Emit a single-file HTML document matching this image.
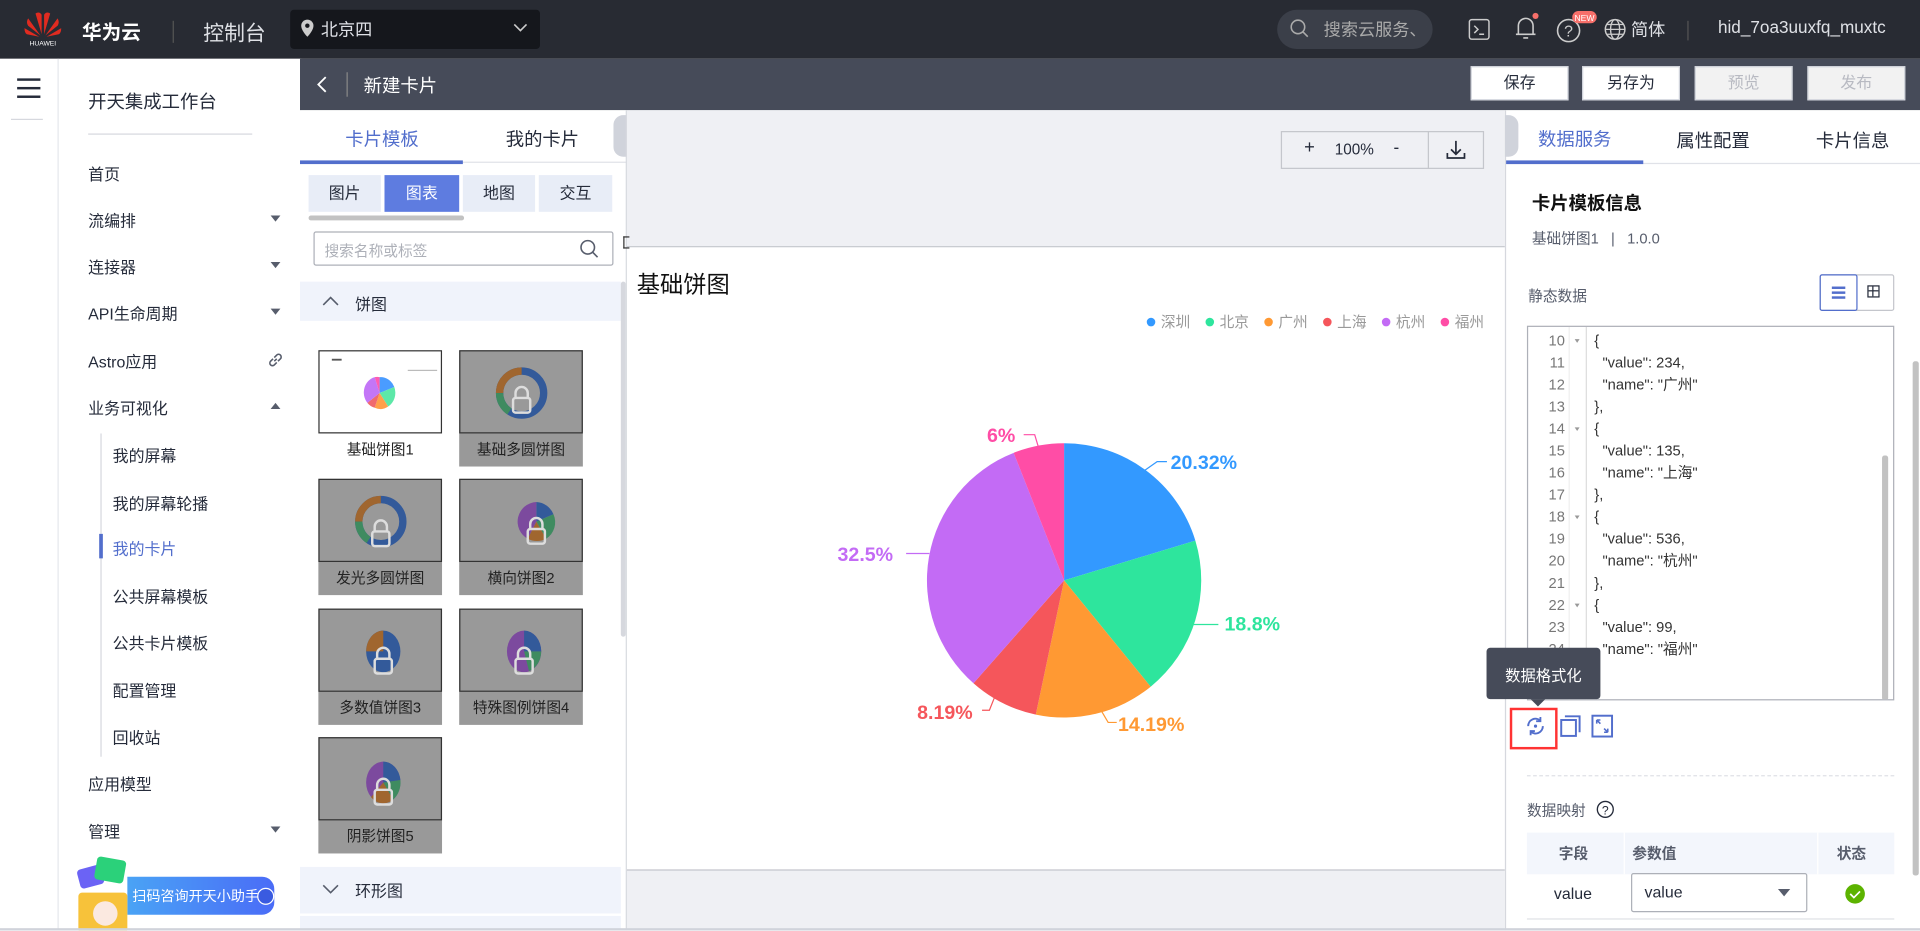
<!DOCTYPE html>
<html><head><meta charset="utf-8"><style>
*{box-sizing:border-box;margin:0;padding:0}
html,body{width:1920px;height:930px;overflow:hidden;background:#fff}
body{font-family:"Liberation Sans","Noto Sans CJK SC",sans-serif;color:#252b3a}
#w{position:absolute;left:0;top:0;width:1568px;height:760px;transform:scale(1.22449);transform-origin:0 0;overflow:hidden}
.a{position:absolute}
.top{left:0;top:0;width:1568px;height:48px;background:#282b33;color:#fff}
.nav{left:0;top:48px;width:48px;height:712px;border-right:1px solid #e3e5ea;background:#fff}
.side{left:48px;top:48px;width:197px;height:712px;background:#fff}
.side .it{position:absolute;left:24px;font-size:13px;color:#252b3a}
.side .sub{left:44px}
.tri{position:absolute;right:16px;width:0;height:0;border-left:4px solid transparent;border-right:4px solid transparent;border-top:5px solid #575d6c}
.bar{left:245px;top:48px;width:1323px;height:42px;background:#464b59}
.btn{position:absolute;top:6px;width:80px;height:28px;background:#fff;border:1px solid #d0d3db;font-size:13px;text-align:center;line-height:26px;color:#252b3a}
.btn.d{background:#f2f2f2;color:#b8bac2}
.lp{left:245px;top:90px;width:267px;height:670px;background:#fff}
.card{position:absolute;width:101px;font-size:12px;text-align:center}
.card .im{height:68px;border:1px solid #333;background:#999;position:relative;overflow:hidden}
.card .lb{height:27px;line-height:27px;background:#999;color:#222}
.cv{left:512px;top:90px;width:717px;height:670px;background:#eff0f4}
.rp{left:1229px;top:90px;width:339px;height:670px;background:#fff;border-left:1px solid #d6d8de}
.code{font-family:"Liberation Sans","Noto Sans CJK SC",sans-serif;font-size:12px;line-height:18px;white-space:pre;color:#333}
.fa{position:absolute;left:38px;width:0;height:0;border-left:2.5px solid transparent;border-right:2.5px solid transparent;border-top:3px solid #999}
</style></head><body><div id="w">

<div class="a top">
  <svg class="a" style="left:17px;top:8px" width="36" height="30" viewBox="0 0 36 30">
    <g fill="#e02b20"><path d="M17 20 L12 3 Q15 1 17 4Z"/><path d="M19 20 L24 3 Q21 1 19 4Z"/><path d="M16 21 L6 7 Q4 10 6 13Z"/><path d="M20 21 L30 7 Q32 10 30 13Z"/><path d="M15 22 L3 15 Q3 19 5 20Z"/><path d="M21 22 L33 15 Q33 19 31 20Z"/></g>
    <text x="18" y="29" font-size="5.5" fill="#fff" text-anchor="middle" font-family="Liberation Sans">HUAWEI</text>
  </svg>
  <div class="a" style="left:67px;top:13px;font-size:16px;font-weight:bold">华为云</div>
  <div class="a" style="left:141px;top:17px;width:1px;height:18px;background:#555"></div>
  <div class="a" style="left:166px;top:13px;font-size:17px;color:#dfe1e6">控制台</div>
  <div class="a" style="left:237px;top:8px;width:204px;height:32px;background:#15171c;border-radius:3px"></div>
  <svg class="a" style="left:245px;top:15px" width="12" height="16" viewBox="0 0 12 16"><path d="M6 1a5 5 0 0 0-5 5c0 4 5 9 5 9s5-5 5-9a5 5 0 0 0-5-5z" fill="#ccc"/><circle cx="6" cy="6" r="1.8" fill="#15171c"/></svg>
  <div class="a" style="left:262px;top:14px;font-size:14px;color:#dfe1e6">北京四</div>
  <svg class="a" style="left:419px;top:19px" width="12" height="8"><path d="M1 1l5 5 5-5" stroke="#ccc" fill="none" stroke-width="1.3"/></svg>
  <div class="a" style="left:1043px;top:8px;width:127px;height:32px;background:#3b3f49;border-radius:16px"></div>
  <svg class="a" style="left:1053px;top:15px" width="16" height="18"><circle cx="7" cy="7" r="5.5" stroke="#aaa" fill="none" stroke-width="1.3"/><path d="M11 11l4 4" stroke="#aaa" stroke-width="1.3"/></svg>
  <div class="a" style="left:1081px;top:14px;font-size:14px;color:#aaa;width:84px;overflow:hidden;white-space:nowrap">搜索云服务、f</div>
  <svg class="a" style="left:1199px;top:15px" width="18" height="18"><rect x="1" y="1" width="16" height="16" rx="2" stroke="#ccc" fill="none" stroke-width="1.2"/><path d="M5 6l3 3-3 3M9 13h4" stroke="#ccc" fill="none" stroke-width="1.2"/></svg>
  <svg class="a" style="left:1235px;top:10px" width="22" height="24"><path d="M5 18V11a6 6 0 0 1 12 0v7zM3 18h16M9 21h4" stroke="#ccc" fill="none" stroke-width="1.3"/><circle cx="19" cy="3" r="2.5" fill="#f66f6a"/></svg>
  <svg class="a" style="left:1270px;top:8px" width="36" height="30"><circle cx="11" cy="17" r="9" stroke="#ccc" fill="none" stroke-width="1.3"/><text x="11" y="22" font-size="13" fill="#ccc" text-anchor="middle">?</text><rect x="14" y="1" width="20" height="10" rx="5" fill="#f66f6a"/><text x="24" y="9" font-size="7" fill="#fff" text-anchor="middle">NEW</text></svg>
  <svg class="a" style="left:1309px;top:14px" width="20" height="20"><circle cx="10" cy="10" r="8" stroke="#ccc" fill="none" stroke-width="1.2"/><ellipse cx="10" cy="10" rx="3.7" ry="8" stroke="#ccc" fill="none" stroke-width="1.1"/><path d="M2 10h16M3.5 6h13M3.5 14h13" stroke="#ccc" stroke-width="1"/></svg>
  <div class="a" style="left:1332px;top:14px;font-size:14px;color:#dfe1e6">简体</div>
  <div class="a" style="left:1378px;top:17px;width:1px;height:16px;background:#555"></div>
  <div class="a" style="left:1403px;top:14px;font-size:14px;color:#dfe1e6">hid_7oa3uuxfq_muxtc</div>
</div>

<div class="a nav">
  <div class="a" style="left:14px;top:16px;width:19px;height:2px;background:#252b3a;box-shadow:0 7px 0 #252b3a,0 14px 0 #252b3a"></div>
  <div class="a" style="left:9px;top:49px;width:26px;height:1px;background:#d6d8de"></div>
</div>

<div class="a side">
  <div class="it" style="top:24px;font-size:15px">开天集成工作台</div>
  <div class="a" style="left:24px;top:61px;width:134px;height:1px;background:#d6d8de"></div>
  <div class="it" style="top:84px">首页</div>
  <div class="it" style="top:122px">流编排</div><div class="tri" style="top:128px"></div>
  <div class="it" style="top:160px">连接器</div><div class="tri" style="top:166px"></div>
  <div class="it" style="top:198px">API生命周期</div><div class="tri" style="top:204px"></div>
  <div class="it" style="top:237px">Astro应用</div>
  <svg class="a" style="left:170px;top:239px" width="14" height="14"><path d="M6 8l2-2M5 6L3 8a2 2 0 0 0 3 3l2-2M9 8l2-2a2 2 0 0 0-3-3L6 5" stroke="#575d6c" fill="none" stroke-width="1.3"/></svg>
  <div class="it" style="top:275px">业务可视化</div><div class="tri" style="top:281px;border-top:0;border-bottom:5px solid #575d6c"></div>
  <div class="a" style="left:34px;top:306px;width:1px;height:264px;background:#d6d8de"></div>
  <div class="a" style="left:33px;top:388px;width:3px;height:20px;background:#526ecc"></div>
  <div class="it sub" style="top:314px">我的屏幕</div>
  <div class="it sub" style="top:353px">我的屏幕轮播</div>
  <div class="it sub" style="top:390px;color:#526ecc">我的卡片</div>
  <div class="it sub" style="top:429px">公共屏幕模板</div>
  <div class="it sub" style="top:467px">公共卡片模板</div>
  <div class="it sub" style="top:506px">配置管理</div>
  <div class="it sub" style="top:544px">回收站</div>
  <div class="it" style="top:582px">应用模型</div>
  <div class="it" style="top:621px">管理</div><div class="tri" style="top:627px"></div>
  <div class="a" style="left:56px;top:668px;width:120px;height:31px;border-radius:0 10px 10px 0;background:linear-gradient(90deg,#4aa3f5,#4a6cf7)"></div>
  <div class="a" style="left:60px;top:676px;font-size:11.5px;color:#fff">扫码咨询开天小助手</div>
  <div class="a" style="left:162px;top:677px;width:14px;height:14px;border-radius:7px;background:#3a5be0;border:1px solid #fff"></div>
  <div class="a" style="left:16px;top:660px;width:20px;height:16px;background:#6b63f5;border-radius:3px;transform:rotate(-15deg)"></div>
  <div class="a" style="left:30px;top:653px;width:24px;height:19px;background:#2bd17a;border-radius:3px;transform:rotate(10deg)"></div>
  <div class="a" style="left:16px;top:681px;width:40px;height:33px;background:#f7c23a;border-radius:3px"></div>
  <div class="a" style="left:28px;top:688px;width:20px;height:20px;background:#fbe9e0;border-radius:10px"></div>
</div>
<div class="a" style="left:245px;top:48px;width:1px;height:712px;background:#e3e5ea"></div>

<div class="a bar">
  <svg class="a" style="left:13px;top:13px" width="10" height="16"><path d="M8 2L2 8l6 6" stroke="#fff" fill="none" stroke-width="1.5"/></svg>
  <div class="a" style="left:38px;top:11px;width:1px;height:20px;background:#888"></div>
  <div class="a" style="left:52px;top:11px;font-size:15px;color:#fff">新建卡片</div>
  <div class="btn" style="left:956px">保存</div>
  <div class="btn" style="left:1047px">另存为</div>
  <div class="btn d" style="left:1139px">预览</div>
  <div class="btn d" style="left:1231px">发布</div>
</div>

<div class="a lp">
  <div class="a" style="left:12px;top:13px;font-size:15px;color:#526ecc;width:110px;text-align:center">卡片模板</div>
  <div class="a" style="left:148px;top:13px;font-size:15px;width:100px;text-align:center">我的卡片</div>
  <div class="a" style="left:0;top:42px;width:267px;height:1px;background:#e0e2e8"></div>
  <div class="a" style="left:0;top:41px;width:133px;height:3px;background:#526ecc"></div>
  <div class="a" style="left:256px;top:4px;width:11px;height:34px;background:#d0d3db;border-radius:8px 0 0 8px"></div>
  <div class="a" style="left:7px;top:53px;width:59px;height:30px;background:#e8edf7;font-size:13px;text-align:center;line-height:30px">图片</div>
  <div class="a" style="left:69px;top:53px;width:61px;height:30px;background:#5e7ce0;color:#fff;font-size:13px;text-align:center;line-height:30px">图表</div>
  <div class="a" style="left:133px;top:53px;width:59px;height:30px;background:#e8edf7;font-size:13px;text-align:center;line-height:30px">地图</div>
  <div class="a" style="left:195px;top:53px;width:60px;height:30px;background:#e8edf7;font-size:13px;text-align:center;line-height:30px">交互</div>
  <div class="a" style="left:7px;top:86px;width:127px;height:4px;background:#c2c2c2;border-radius:2px"></div>
  <div class="a" style="left:11px;top:99px;width:245px;height:28px;border:1px solid #adb0b8;border-radius:2px;font-size:12px;color:#adb0b8;padding:6px 8px">搜索名称或标签</div>
  <svg class="a" style="left:228px;top:105px" width="16" height="17"><circle cx="7" cy="7" r="5.5" stroke="#575d6c" fill="none" stroke-width="1.3"/><path d="M11 11l4 4" stroke="#575d6c" stroke-width="1.3"/></svg>
  <div class="a" style="left:0;top:140px;width:262px;height:32px;background:#f0f3fb"></div>
  <svg class="a" style="left:18px;top:152px" width="14" height="9"><path d="M1 7l6-6 6 6" stroke="#575d6c" fill="none" stroke-width="1.3"/></svg>
  <div class="a" style="left:45px;top:148px;font-size:13px">饼图</div>
  <div class="a" style="left:262px;top:140px;width:4px;height:290px;background:#d6d8de;border-radius:2px"></div>
  <div class="a" style="left:0;top:618px;width:262px;height:38px;background:#f0f3fb"></div>
  <svg class="a" style="left:18px;top:632px" width="14" height="9"><path d="M1 1l6 6 6-6" stroke="#575d6c" fill="none" stroke-width="1.3"/></svg>
  <div class="a" style="left:45px;top:627px;font-size:13px">环形图</div>
  <div class="a" style="left:0;top:658px;width:262px;height:12px;background:#f0f3fb"></div>

  <div class="card" style="left:15px;top:196px"><div class="im" style="background:#fff">
    <svg width="99" height="66"><g transform="translate(-12,0)"><path d="M61 34 L61 21 A12 13 0 0 1 73 29Z" fill="#4a9cff"/><path d="M61 34 L73 29 A12 13 0 0 1 68 45Z" fill="#5de8a8"/><path d="M61 34 L68 45 A12 13 0 0 1 57 46Z" fill="#ffa04a"/><path d="M61 34 L57 46 A12 13 0 0 1 51 42Z" fill="#f06a6e"/><path d="M61 34 L51 42 A12 13 0 0 1 57 21Z" fill="#c376f7"/><path d="M61 34 L57 21 A12 13 0 0 1 61 21Z" fill="#ff5bb0"/></g><rect x="10" y="6" width="8" height="1.5" fill="#555"/><rect x="72" y="15" width="24" height="1" fill="#bbb"/></svg>
  </div><div class="lb" style="background:#fff">基础饼图1</div></div>
  <div class="card" style="left:130px;top:196px"><div class="im"><svg width="99" height="66"><circle cx="50" cy="34" r="18" stroke="#335a9a" stroke-width="6" fill="none"/><path d="M50 16 A18 18 0 0 0 32 34" stroke="#a0662f" stroke-width="6" fill="none"/><path d="M32 34 A18 18 0 0 0 40 49" stroke="#3f8b60" stroke-width="6" fill="none"/><rect x="43" y="38" width="14" height="12" rx="2" stroke="#ddd" fill="none" stroke-width="2"/><path d="M45 38v-4a5 5 0 0 1 10 0v4" stroke="#ddd" fill="none" stroke-width="2"/></svg></div><div class="lb">基础多圆饼图</div></div>
  <div class="card" style="left:15px;top:301px"><div class="im"><svg width="99" height="66"><circle cx="50" cy="34" r="18" stroke="#335a9a" stroke-width="6" fill="none"/><path d="M50 16 A18 18 0 0 0 32 34" stroke="#a0662f" stroke-width="6" fill="none"/><path d="M32 34 A18 18 0 0 0 40 49" stroke="#3f8b60" stroke-width="6" fill="none"/><rect x="43" y="42" width="14" height="12" rx="2" stroke="#ddd" fill="none" stroke-width="2"/><path d="M45 42v-4a5 5 0 0 1 10 0v4" stroke="#ddd" fill="none" stroke-width="2"/></svg></div><div class="lb">发光多圆饼图</div></div>
  <div class="card" style="left:130px;top:301px"><div class="im"><svg width="99" height="66"><path d="M62 34 L62 18 A16 16 0 0 1 76 28Z" fill="#335a9a"/><path d="M62 34 L76 28 A16 16 0 0 1 70 48Z" fill="#3f8b60"/><path d="M62 34 L70 48 A16 16 0 0 1 55 48Z" fill="#a0662f"/><path d="M62 34 L55 48 A16 16 0 0 1 62 18Z" fill="#7c4a9e"/><rect x="55" y="40" width="14" height="12" rx="2" stroke="#ddd" fill="none" stroke-width="2"/><path d="M57 40v-4a5 5 0 0 1 10 0v4" stroke="#ddd" fill="none" stroke-width="2"/></svg></div><div class="lb">横向饼图2</div></div>
  <div class="card" style="left:15px;top:407px"><div class="im"><svg width="99" height="66"><ellipse cx="52" cy="34" rx="14" ry="17" fill="#335a9a"/><path d="M52 34 L38 34 A14 17 0 0 1 52 17Z" fill="#a0662f"/><rect x="45" y="40" width="14" height="12" rx="2" stroke="#ddd" fill="none" stroke-width="2"/><path d="M47 40v-4a5 5 0 0 1 10 0v4" stroke="#ddd" fill="none" stroke-width="2"/></svg></div><div class="lb">多数值饼图3</div></div>
  <div class="card" style="left:130px;top:407px"><div class="im"><svg width="99" height="66"><ellipse cx="52" cy="34" rx="14" ry="17" fill="#7c4a9e"/><path d="M52 34 L52 17 A14 17 0 0 1 66 34Z" fill="#335a9a"/><path d="M52 34 L66 34 A14 17 0 0 1 56 50Z" fill="#3f8b60"/><rect x="45" y="40" width="14" height="12" rx="2" stroke="#ddd" fill="none" stroke-width="2"/><path d="M47 40v-4a5 5 0 0 1 10 0v4" stroke="#ddd" fill="none" stroke-width="2"/></svg></div><div class="lb">特殊图例饼图4</div></div>
  <div class="card" style="left:15px;top:512px"><div class="im"><svg width="99" height="66"><ellipse cx="52" cy="36" rx="14" ry="17" fill="#7c4a9e"/><path d="M52 36 L52 19 A14 17 0 0 1 66 34Z" fill="#335a9a"/><path d="M52 36 L66 34 A14 17 0 0 1 60 50Z" fill="#3f8b60"/><path d="M52 36 L60 50 A14 17 0 0 1 42 48Z" fill="#a0662f"/><rect x="45" y="42" width="14" height="12" rx="2" stroke="#ddd" fill="none" stroke-width="2"/><path d="M47 42v-4a5 5 0 0 1 10 0v4" stroke="#ddd" fill="none" stroke-width="2"/></svg></div><div class="lb">阴影饼图5</div></div>
</div>
<div class="a" style="left:511px;top:90px;width:1px;height:670px;background:#d6d8de"></div>

<div class="a cv">
  <div class="a" style="left:534px;top:17px;width:166px;height:31px;border:1px solid #c4c6cc;background:#eff0f4"></div>
  <div class="a" style="left:553px;top:22px;font-size:15px">+</div>
  <div class="a" style="left:578px;top:25px;font-size:12.5px">100%</div>
  <div class="a" style="left:626px;top:22px;font-size:14px">-</div>
  <div class="a" style="left:654px;top:17px;width:1px;height:31px;background:#c4c6cc"></div>
  <svg class="a" style="left:668px;top:23px" width="18" height="18"><path d="M9 2v11M5 9l4 4 4-4M2 12v4h14v-4" stroke="#252b3a" fill="none" stroke-width="1.4"/></svg>
  <div class="a" style="left:0;top:111px;width:717px;height:1px;background:#c4c6cc"></div>
  <div class="a" style="left:0;top:112px;width:717px;height:508px;background:#fff"></div>
  <div class="a" style="left:8px;top:128px;font-size:19px;color:#111">基础饼图</div>
  <div class="a" style="left:0;top:620px;width:717px;height:1px;background:#c4c6cc"></div>
  <div class="a" style="left:-3px;top:103px;width:5px;height:10px;border:1px solid #333;border-right:0"></div>
</div>
<svg class="a" style="left:512px;top:202px" width="717" height="508">
  <g font-size="12" font-family="Liberation Sans,Noto Sans CJK SC,sans-serif" fill="#999">
    <circle cx="428" cy="61" r="3.5" fill="#3399ff"/><text x="436" y="65">深圳</text>
    <circle cx="476" cy="61" r="3.5" fill="#2ee59d"/><text x="484" y="65">北京</text>
    <circle cx="524" cy="61" r="3.5" fill="#ff9933"/><text x="532" y="65">广州</text>
    <circle cx="572" cy="61" r="3.5" fill="#f5565b"/><text x="580" y="65">上海</text>
    <circle cx="620" cy="61" r="3.5" fill="#c36bf5"/><text x="628" y="65">杭州</text>
    <circle cx="668" cy="61" r="3.5" fill="#ff4da6"/><text x="676" y="65">福州</text>
  </g>
  <g transform="translate(-512,-202)">
    <path d="M869 474 L869 362 A112 112 0 0 1 976.2 441.5Z" fill="#3399ff"/>
    <path d="M869 474 L976.2 441.5 A112 112 0 0 1 939.7 560.8Z" fill="#2ee59d"/>
    <path d="M869 474 L939.7 560.8 A112 112 0 0 1 845.9 583.6Z" fill="#ff9933"/>
    <path d="M869 474 L845.9 583.6 A112 112 0 0 1 795 558Z" fill="#f5565b"/>
    <path d="M869 474 L795 558 A112 112 0 0 1 827.8 369.8Z" fill="#c36bf5"/>
    <path d="M869 474 L827.8 369.8 A112 112 0 0 1 869 362Z" fill="#ff4da6"/>
    <g fill="none" stroke-width="1">
      <path d="M935 384 L945 377 L953 377" stroke="#3399ff"/>
      <path d="M971 510 L985 510 L995 510" stroke="#2ee59d"/>
      <path d="M898 578 L905 590 L912 590" stroke="#ff9933"/>
      <path d="M812 570 L808 580 L802 580" stroke="#f5565b"/>
      <path d="M759 452 L748 452 L740 452" stroke="#c36bf5"/>
      <path d="M848 365 L845 355 L836 355" stroke="#ff4da6"/>
    </g>
    <g font-size="16" font-weight="bold" font-family="Liberation Sans,sans-serif">
      <text x="956" y="383" fill="#3399ff">20.32%</text>
      <text x="1000" y="515" fill="#2ee59d">18.8%</text>
      <text x="913" y="597" fill="#ff9933">14.19%</text>
      <text x="749" y="587" fill="#f5565b">8.19%</text>
      <text x="684" y="458" fill="#c36bf5">32.5%</text>
      <text x="806" y="361" fill="#ff4da6">6%</text>
    </g>
  </g>
</svg>

<div class="a rp">
  <div class="a" style="left:-1px;top:4px;width:11px;height:34px;background:#d0d3db;border-radius:0 8px 8px 0"></div>
  <div class="a" style="left:26px;top:13px;font-size:15px;color:#526ecc">数据服务</div>
  <div class="a" style="left:139px;top:14px;font-size:15px">属性配置</div>
  <div class="a" style="left:253px;top:14px;font-size:15px">卡片信息</div>
  <div class="a" style="left:0;top:43px;width:339px;height:1px;background:#e0e2e8"></div>
  <div class="a" style="left:0;top:41px;width:112px;height:3px;background:#526ecc"></div>
  <div class="a" style="left:21px;top:65px;font-size:15px;font-weight:bold;color:#111">卡片模板信息</div>
  <div class="a" style="left:21px;top:96px;font-size:12px;color:#575d6c">基础饼图1&nbsp;&nbsp;&nbsp;|&nbsp;&nbsp;&nbsp;1.0.0</div>
  <div class="a" style="left:18px;top:143px;font-size:12px;color:#575d6c">静态数据</div>
  <div class="a" style="left:256px;top:134px;width:61px;height:30px;border:1px solid #c4c6cc;border-radius:2px"></div>
  <div class="a" style="left:256px;top:134px;width:31px;height:30px;border:1px solid #526ecc;border-radius:2px"></div>
  <div class="a" style="left:266px;top:144px;width:11px;height:1.5px;background:#526ecc;box-shadow:0 4px 0 #526ecc,0 8px 0 #526ecc"></div>
  <div class="a" style="left:295px;top:143px;width:10px;height:10px;border:1.3px solid #252b3a;background:linear-gradient(#252b3a,#252b3a) 50% 0/1.3px 100% no-repeat,linear-gradient(#252b3a,#252b3a) 0 50%/100% 1.3px no-repeat"></div>
  <div class="a" style="left:17px;top:176px;width:300px;height:306px;border:1px solid #adb0b8;overflow:hidden">
    <div class="a" style="left:47px;top:0;width:1px;height:306px;background:#ddd"></div>
    <div class="a" style="left:33px;top:0;width:1px;height:306px;background:#eee"></div>
    <div class="a code" style="left:0;top:2px;width:30px;text-align:right;color:#777">10
11
12
13
14
15
16
17
18
19
20
21
22
23
24</div>
    <div class="fa" style="top:10px"></div>
    <div class="fa" style="top:82px"></div>
    <div class="fa" style="top:154px"></div>
    <div class="fa" style="top:226px"></div>
    <div class="a code" style="left:54px;top:2px">{
  "value": 234,
  "name": "广州"
},
{
  "value": 135,
  "name": "上海"
},
{
  "value": 536,
  "name": "杭州"
},
{
  "value": 99,
  "name": "福州"</div>
    <div class="a" style="left:289px;top:105px;width:5px;height:200px;background:#c2c2c2;border-radius:2px"></div>
  </div>
  <div class="a" style="left:332px;top:205px;width:5px;height:420px;background:#c2c2c2;border-radius:2px"></div>
  <div class="a" style="left:-16px;top:439px;width:93px;height:42px;background:#464b59;border-radius:3px;color:#fff;font-size:12.5px;padding:12px 0 0 0;text-align:center">数据格式化</div>
  <div class="a" style="left:20px;top:481px;width:0;height:0;border-left:6px solid transparent;border-right:6px solid transparent;border-top:6px solid #464b59"></div>
  <div class="a" style="left:3px;top:488px;width:39px;height:34px;border:2px solid #f33"></div>
  <svg class="a" style="left:15px;top:494px" width="18" height="18"><path d="M3 9a6 6 0 0 1 10-4.5M15 9a6 6 0 0 1-10 4.5" stroke="#526ecc" fill="none" stroke-width="1.6"/><path d="M13 1.5v3.5h-3.5M5 16.5V13h3.5" stroke="#526ecc" fill="none" stroke-width="1.5"/><circle cx="9" cy="9" r="1.3" fill="#526ecc"/></svg>
  <svg class="a" style="left:43px;top:493px" width="20" height="20"><rect x="2" y="5" width="12" height="13" stroke="#526ecc" fill="none" stroke-width="1.6"/><path d="M5 2h12v13" stroke="#526ecc" fill="none" stroke-width="1.6"/></svg>
  <svg class="a" style="left:69px;top:493px" width="20" height="20"><rect x="1.5" y="1.5" width="16" height="17" stroke="#526ecc" fill="none" stroke-width="1.6"/><path d="M5 5l3 3M5 5h3M5 5v3M14 15l-3-3M14 15h-3M14 15v-3" stroke="#526ecc" fill="none" stroke-width="1.3"/></svg>
  <div class="a" style="left:17px;top:543px;width:300px;border-top:1px dashed #dfe1e6"></div>
  <div class="a" style="left:17px;top:563px;font-size:12px;color:#575d6c">数据映射</div>
  <svg class="a" style="left:73px;top:563px" width="16" height="16"><circle cx="8" cy="8" r="6.5" stroke="#252b3a" fill="none" stroke-width="1.1"/><text x="8" y="12" font-size="10" text-anchor="middle" fill="#252b3a">?</text></svg>
  <div class="a" style="left:17px;top:590px;width:300px;height:34px;background:#f3f6fc"></div>
  <div class="a" style="left:96px;top:590px;width:1px;height:34px;background:#fff"></div>
  <div class="a" style="left:254px;top:590px;width:1px;height:34px;background:#fff"></div>
  <div class="a" style="left:43px;top:598px;font-size:12px;font-weight:bold;color:#575d6c">字段</div>
  <div class="a" style="left:103px;top:598px;font-size:12px;font-weight:bold;color:#575d6c">参数值</div>
  <div class="a" style="left:270px;top:598px;font-size:12px;font-weight:bold;color:#575d6c">状态</div>
  <div class="a" style="left:39px;top:632px;font-size:13px">value</div>
  <div class="a" style="left:102px;top:623px;width:144px;height:32px;border:1px solid #adb0b8;border-radius:2px;font-size:13px;padding:7px 10px">value</div>
  <div class="a" style="left:222px;top:636px;width:0;height:0;border-left:5px solid transparent;border-right:5px solid transparent;border-top:6px solid #575d6c"></div>
  <svg class="a" style="left:276px;top:631px" width="18" height="18"><circle cx="9" cy="9" r="8" fill="#5cb300"/><path d="M5 9l3 3 5-5" stroke="#fff" fill="none" stroke-width="1.4"/></svg>
  <div class="a" style="left:17px;top:660px;width:300px;height:1px;background:#dfe1e6"></div>
</div>
<div class="a" style="left:0;top:758px;width:1568px;height:2px;background:#d0d3db"></div>
</div></body></html>
